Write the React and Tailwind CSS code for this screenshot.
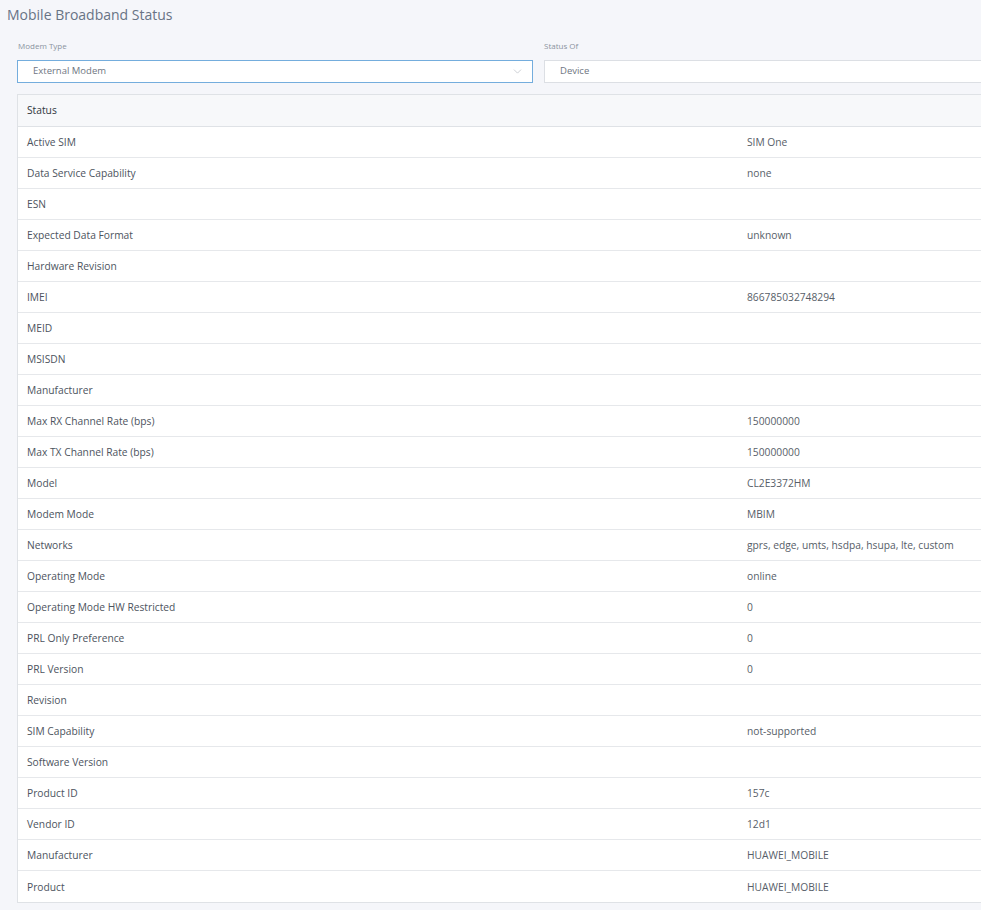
import { ChevronDown } from 'lucide-react';

const rows = [
  ['Active SIM', 'SIM One'],
  ['Data Service Capability', 'none'],
  ['ESN', ''],
  ['Expected Data Format', 'unknown'],
  ['Hardware Revision', ''],
  ['IMEI', '866785032748294'],
  ['MEID', ''],
  ['MSISDN', ''],
  ['Manufacturer', ''],
  ['Max RX Channel Rate (bps)', '150000000'],
  ['Max TX Channel Rate (bps)', '150000000'],
  ['Model', 'CL2E3372HM'],
  ['Modem Mode', 'MBIM'],
  ['Networks', 'gprs, edge, umts, hsdpa, hsupa, lte, custom'],
  ['Operating Mode', 'online'],
  ['Operating Mode HW Restricted', '0'],
  ['PRL Only Preference', '0'],
  ['PRL Version', '0'],
  ['Revision', ''],
  ['SIM Capability', 'not-supported'],
  ['Software Version', ''],
  ['Product ID', '157c'],
  ['Vendor ID', '12d1'],
  ['Manufacturer', 'HUAWEI_MOBILE'],
  ['Product', 'HUAWEI_MOBILE'],
];

export default function App() {
  return (
    <div className="w-[981px] h-[910px] overflow-hidden bg-[#f5f6fa] font-['Open_Sans',sans-serif]">
      <div className="w-[1060px]">
        <h1 className="h-[30px] pl-[7px] pt-[4px] text-[14px] leading-[22px] text-[#687385]">
          Mobile Broadband Status
        </h1>

        <div className="grid grid-cols-2 gap-[11px] pl-[17px] pt-[9px]">
          <div>
            <div className="h-[21px] pl-[1px] text-[8px] leading-[14px] text-[#8a93a0]">Modem Type</div>
            <div className="flex h-[23px] items-center justify-between border border-[#74addd] bg-white pl-[15px] pr-[8px]">
              <span className="text-[9.5px] text-[#6f7682]">External Modem</span>
              <ChevronDown className="h-[13px] w-[13px] text-[#b3b8c0]" strokeWidth={1.2} />
            </div>
          </div>
          <div>
            <div className="h-[21px] text-[8px] leading-[14px] text-[#8a93a0]">Status Of</div>
            <div className="flex h-[23px] items-center border border-[#dcdfe4] bg-white pl-[15px]">
              <span className="text-[9.5px] text-[#6f7682]">Device</span>
            </div>
          </div>
        </div>

        <div className="ml-[17px] mt-[11px] border border-[#dfe2e6] bg-white">
          <div className="flex h-[32px] items-center border-b border-[#dfe2e6] bg-[#f7f8fa] pl-[9px] text-[10.25px] text-[#2f3640]">
            Status
          </div>
          {rows.map(([k, v], i) => (
            <div
              key={i}
              className={`flex h-[31px] items-center pt-[2px] text-[10.25px] text-[#4d545e] ${i < rows.length - 1 ? 'border-b border-[#e6e8eb]' : ''}`}
            >
              <div className="w-[720px] pl-[9px]">{k}</div>
              <div className="pl-[9px] text-[#575e68]">{v}</div>
            </div>
          ))}
        </div>
      </div>
    </div>
  );
}
